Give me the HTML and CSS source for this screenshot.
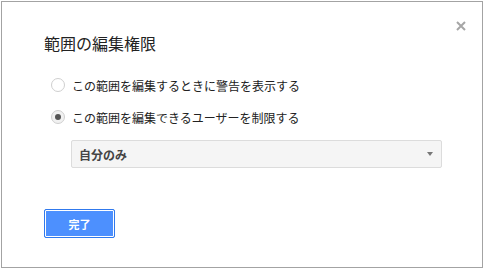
FILE: index.html
```html
<!DOCTYPE html>
<html lang="ja">
<head>
<meta charset="utf-8">
<link rel="stylesheet" href="styles.css">
</head>
<body>
<div class="dialog">
  <button class="close" aria-label="閉じる">
    <svg width="10" height="10" viewBox="0 0 10 10"><path d="M1 1L9 9M9 1L1 9" stroke="#a6a6a6" stroke-width="2" fill="none"/></svg>
  </button>
  <h1 class="title">範囲の編集権限</h1>
  <div class="options">
    <label class="option"><span class="radio"></span><span class="label">この範囲を編集するときに警告を表示する</span></label>
    <label class="option"><span class="radio checked"></span><span class="label">この範囲を編集できるユーザーを制限する</span></label>
  </div>
  <div class="select">
    <span class="select-text">自分のみ</span>
    <span class="arrow"></span>
  </div>
  <div class="buttons">
    <button class="done">完了</button>
  </div>
</div>
</body>
</html>
```
FILE: styles.css
```css
html, body {
  margin: 0;
  padding: 0;
  background: #fff;
}
body {
  font-family: "Noto Sans CJK JP", "Liberation Sans", sans-serif;
  color: #222;
}
.dialog {
  position: relative;
  box-sizing: border-box;
  margin: 1px 0 0 1px;
  width: 482px;
  height: 267px;
  border: 1px solid #a3a3a3;
  padding: 31px 0 0 42px;
  background: #fff;
}
.close {
  position: absolute;
  top: 19px;
  right: 16px;
  width: 10px;
  height: 10px;
  padding: 0;
  border: 0;
  background: none;
  display: block;
}
.close svg { display: block; }
.title {
  margin: 0;
  font-size: 16px;
  line-height: 20px;
  font-weight: normal;
  color: #222;
}
.options {
  margin-top: 22px;
  padding-left: 7px;
  display: flex;
  flex-direction: column;
  gap: 12px;
}
.option {
  display: flex;
  align-items: center;
  height: 20px;
  font-size: 12px;
  color: #222;
}
.radio {
  box-sizing: border-box;
  width: 14px;
  height: 14px;
  border-radius: 50%;
  border: 1px solid #cfcfcf;
  background: #fff;
  margin-right: 7px;
  display: flex;
  align-items: center;
  justify-content: center;
}
.radio.checked {
  background: #f1f1f1;
}
.radio.checked::after {
  content: "";
  width: 6px;
  height: 6px;
  border-radius: 50%;
  background: #555;
}
.select {
  box-sizing: border-box;
  margin: 13px 0 0 27px;
  width: 371px;
  height: 28px;
  border: 1px solid #dcdcdc;
  border-radius: 2px;
  background: #f5f5f5;
  display: flex;
  align-items: center;
  justify-content: space-between;
  padding: 0 8px 0 7px;
}
.select-text {
  font-size: 12px;
  font-weight: bold;
  color: #444;
}
.arrow {
  width: 0;
  height: 0;
  border-left: 3.5px solid transparent;
  border-right: 3.5px solid transparent;
  border-top: 4px solid #777;
}
.buttons {
  margin-top: 41px;
}
.done {
  box-sizing: border-box;
  width: 71px;
  height: 29px;
  border: 1px solid #3079ed;
  border-radius: 2px;
  background: #4d90fe;
  box-shadow: inset 0 0 0 1px #fff;
  color: #fff;
  font-family: "Noto Sans CJK JP", sans-serif;
  font-size: 11px;
  font-weight: bold;
  padding: 0;
}
```
